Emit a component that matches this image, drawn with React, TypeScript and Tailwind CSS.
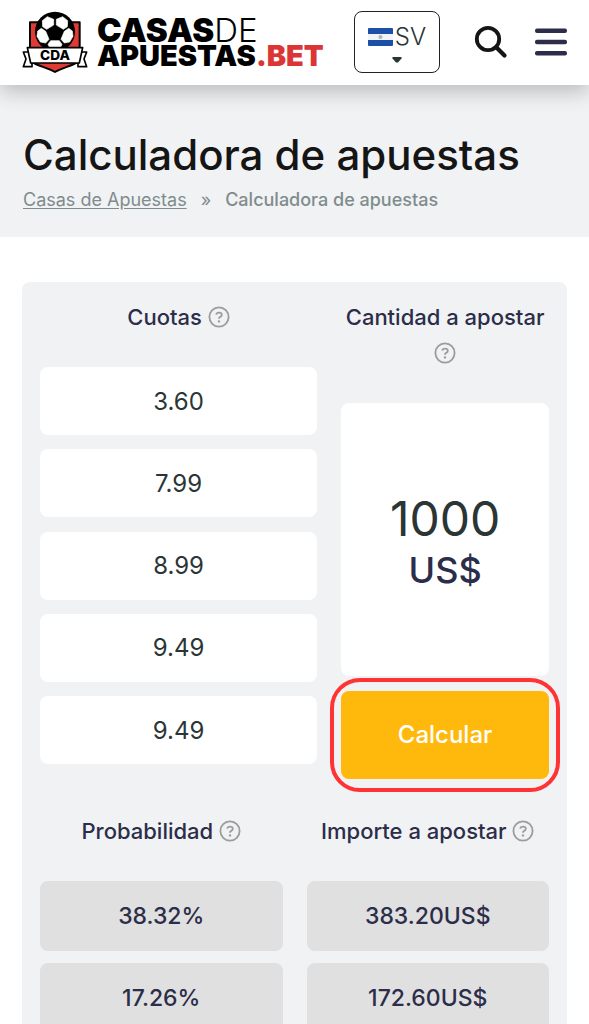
import React from "react";

const odds = [
  { id: "cuota-1", value: "3.60" },
  { id: "cuota-2", value: "7.99" },
  { id: "cuota-3", value: "8.99" },
  { id: "cuota-4", value: "9.49" },
  { id: "cuota-5", value: "9.49" },
];

const results = [
  { probability: "38.32%", stake: "383.20US$" },
  { probability: "17.26%", stake: "172.60US$" },
];

const Crest = () => (
  <svg viewBox="36 30 198 186" className="h-[62px] w-[66px] shrink-0" aria-hidden="true">
    {/* Shield */}
    <path
      d="M60 64H209V172C209 190 165 196 135 213C105 196 60 190 60 172Z"
      fill="#e03a35"
      stroke="#000"
      strokeWidth="6"
      strokeLinejoin="round"
    />
    {/* Ball */}
    <circle cx="135" cy="92" r="60" fill="#000" />
    <g fill="#fff" stroke="#fff" strokeWidth="2" strokeLinejoin="round">
      <path d="M131 72L110 85L98 77L97 59L112 47L131 55Z" />
      <path d="M139 72L160 85L172 77L173 59L158 47L139 55Z" />
      <path d="M94 82L107 91L117 115L107 126L91 123L81 106L83 90Z" />
      <path d="M176 82L163 91L153 115L163 126L179 123L189 106L187 90Z" />
      <path d="M122 119H148L156 130L150 142H120L114 130Z" />
    </g>
    {/* Ribbon */}
    <g fill="#fff" stroke="#000" strokeWidth="5" strokeLinejoin="round">
      <path d="M56 153H40L48 174L40 197H66V184Z" />
      <path d="M214 153H230L222 174L230 197H204V184Z" />
      <path d="M52 140H218L208 186H62Z" />
    </g>
    <text
      x="135"
      y="177"
      textAnchor="middle"
      fontFamily="Inter, sans-serif"
      fontWeight="800"
      fontSize="41"
    >
      CDA
    </text>
  </svg>
);

const Flag = () => (
  <svg viewBox="0 0 25 18" className="h-[18px] w-[25px]" aria-hidden="true">
    <rect width="25" height="18" rx="1" fill="#1c4fa8" />
    <rect y="6" width="25" height="6" fill="#f1f3f8" />
    <circle cx="12.5" cy="9" r="2" fill="#b3b8ac" />
  </svg>
);

const HelpIcon = () => (
  <svg
    viewBox="0 0 22 22"
    className="inline-block size-[22px] align-[-3px]"
    fill="none"
    stroke="#9c9c9c"
    aria-hidden="true"
  >
    <circle cx="11" cy="11" r="9.6" strokeWidth="1.8" />
    <path d="M8.2 8.6Q8.6 6.6 11 6.6Q13.8 6.6 13.8 8.8Q13.8 10.2 12.2 10.9Q11 11.4 11 12.8" strokeWidth="1.8" />
    <circle cx="11" cy="15.4" r="1.2" fill="#9c9c9c" stroke="none" />
  </svg>
);

const Header = () => (
  <header className="relative flex h-[85px] items-center justify-between bg-white px-[22px] pb-[2px] shadow-[0_6px_20px_rgba(0,0,0,0.24)]">
    <a href="#" className="flex items-center gap-[9px]">
      <Crest />
      <span className="flex flex-col text-black">
        <span className="text-[33px] leading-[28px] font-black">
          CASAS<span className="font-light">DE</span>
        </span>
        <span className="text-[29px] leading-[24px] font-black">
          APUESTAS<span className="text-[#dc3535]">.BET</span>
        </span>
      </span>
    </a>
    <div className="flex items-center">
      <button
        type="button"
        className="flex h-[62px] w-[86px] flex-col items-center rounded-lg border border-[#222] pt-[9px] text-[24px] leading-[32px] font-light text-[#2b3535]"
      >
        <span className="flex items-center gap-[2px]">
          <Flag />
          SV
        </span>
        <svg viewBox="0 0 10 6" className="mt-[4px] h-[6px] w-[10px]" aria-hidden="true">
          <path d="M0.5 0H9.5V1.5L6 5.5H4L0.5 1.5Z" fill="#2b3535" />
        </svg>
      </button>
      <button type="button" aria-label="Buscar" className="ml-[34px]">
        <svg viewBox="0 0 34 34" className="size-[34px]" fill="none" stroke="#151515" strokeLinecap="round">
          <circle cx="14" cy="14" r="11.2" strokeWidth="3.8" />
          <path d="M22.5 22.5L30.5 30.5" strokeWidth="4.2" />
        </svg>
      </button>
      <button type="button" aria-label="Menú" className="ml-[27px]">
        <svg viewBox="0 0 32 28" className="h-[28px] w-[32px]" fill="#2b2d49">
          <rect y="0.5" width="32" height="4.5" rx="2" />
          <rect y="11.8" width="32" height="4.5" rx="2" />
          <rect y="23" width="32" height="4.5" rx="2" />
        </svg>
      </button>
    </div>
  </header>
);

const App: React.FC = () => {
  return (
    <div className="min-h-screen bg-white font-['Inter',sans-serif]">
      <Header />

      <section className="bg-[#f1f2f4] px-[23px] pt-[43px] pb-[23px]">
        <h1 className="text-[42px] leading-[54px] font-medium text-[#151515]">
          Calculadora de apuestas
        </h1>
        <nav className="mt-[3px] flex items-center text-[18px] leading-[29px] text-[#7f8c8d]">
          <a href="#" className="underline underline-offset-2">
            Casas de Apuestas
          </a>
          <span className="mx-[14px]">»</span>
          <span className="font-medium">Calculadora de apuestas</span>
        </nav>
      </section>

      <main className="px-[22px] pt-[45px]">
        <form className="rounded-lg bg-[#f1f2f4] px-[18px] py-[17px] text-[#2b2d49]">
          <div className="grid grid-cols-[4fr_3fr] gap-6">
            <div>
              <label htmlFor="cuota-1" className="block text-center text-[22px] leading-[36px] font-medium">
                Cuotas <HelpIcon />
              </label>
              <div className="mt-8 flex h-[397px] flex-col justify-between">
                {odds.map((odd, index) => (
                  <input
                    key={odd.id}
                    id={odd.id}
                    aria-label={`Cuota ${index + 1}`}
                    defaultValue={odd.value}
                    className="h-[68px] w-full rounded-lg bg-white text-center text-[24px] text-[#2b3535]"
                  />
                ))}
              </div>
            </div>

            <div>
              <label htmlFor="cantidad" className="block text-center text-[22px] leading-[36px] font-medium">
                Cantidad a apostar <HelpIcon />
              </label>
              <div className="mt-8 flex h-[273px] flex-col items-center justify-center rounded-lg bg-white pt-[3px]">
                <input
                  id="cantidad"
                  defaultValue="1000"
                  className="h-[58px] w-full bg-transparent text-center text-[48px] text-[#2b3535]"
                />
                <span className="text-[36px] leading-[44px] font-medium">US$</span>
              </div>
              <div className="relative mt-[15px]">
                <button
                  type="button"
                  className="h-[88px] w-full rounded-lg bg-[#ffb80c] text-[24px] font-medium text-white"
                >
                  Calcular
                </button>
                <div className="pointer-events-none absolute -inset-x-[11px] -inset-y-[13px] rounded-[30px] border-4 border-[#ff3333]" />
              </div>
            </div>
          </div>

          {/* Results */}
          <table className="mt-[34px] block text-center">
            <thead className="block text-[22px] leading-[36px]">
              <tr className="grid grid-cols-2 gap-6">
                <th className="font-medium">
                  Probabilidad <HelpIcon />
                </th>
                <th className="font-medium whitespace-nowrap">
                  Importe a apostar <HelpIcon />
                </th>
              </tr>
            </thead>
            <tbody className="mt-8 grid gap-3 text-[23px] leading-[70px] font-medium">
              {results.map((row) => (
                <tr key={row.probability} className="grid grid-cols-2 gap-6">
                  <td className="rounded-lg bg-[#e0e0e0]">{row.probability}</td>
                  <td className="rounded-lg bg-[#e0e0e0]">{row.stake}</td>
                </tr>
              ))}
            </tbody>
          </table>
        </form>
      </main>
    </div>
  );
};

export default App;
